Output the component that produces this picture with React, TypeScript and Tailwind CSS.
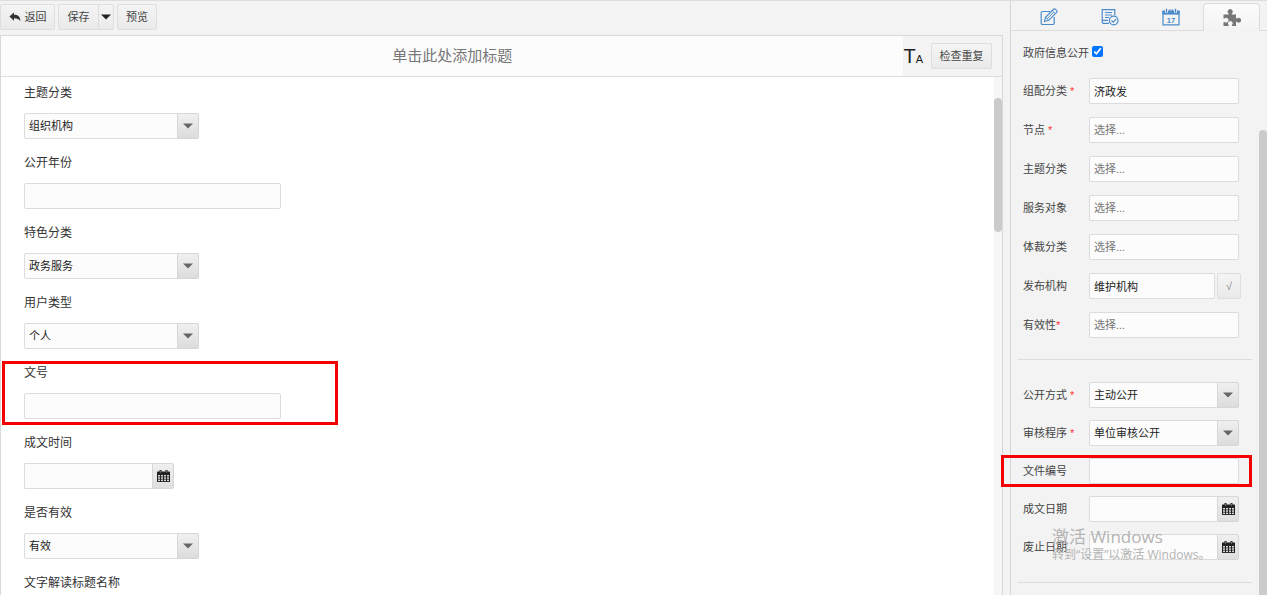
import { useId, type ReactNode } from "react";

type FieldKind = "select" | "text" | "date";

interface Field {
  label: string;
  kind: FieldKind;
  value?: string;
  marked?: boolean;
}

interface SideField {
  label: string;
  kind: FieldKind;
  value?: string;
  placeholder?: string;
  required?: boolean;
  tight?: boolean;
  confirm?: boolean;
  marked?: boolean;
}

const documentFields: Field[] = [
  { label: "主题分类", kind: "select", value: "组织机构" },
  { label: "公开年份", kind: "text" },
  { label: "特色分类", kind: "select", value: "政务服务" },
  { label: "用户类型", kind: "select", value: "个人" },
  { label: "文号", kind: "text", marked: true },
  { label: "成文时间", kind: "date" },
  { label: "是否有效", kind: "select", value: "有效" },
  { label: "文字解读标题名称", kind: "text" },
];

const classFields: SideField[] = [
  { label: "组配分类", kind: "text", value: "济政发", required: true },
  { label: "节点", kind: "text", placeholder: "选择...", required: true },
  { label: "主题分类", kind: "text", placeholder: "选择..." },
  { label: "服务对象", kind: "text", placeholder: "选择..." },
  { label: "体裁分类", kind: "text", placeholder: "选择..." },
  { label: "发布机构", kind: "text", value: "维护机构", confirm: true },
  { label: "有效性", kind: "text", placeholder: "选择...", required: true, tight: true },
];

const publishFields: SideField[] = [
  { label: "公开方式", kind: "select", value: "主动公开", required: true },
  { label: "审核程序", kind: "select", value: "单位审核公开", required: true },
  { label: "文件编号", kind: "text", marked: true },
  { label: "成文日期", kind: "date" },
  { label: "废止日期", kind: "date" },
];

const boxClass =
  "block h-[26px] rounded-[2px] border border-[#dcdcdc] bg-[#fcfcfc] px-1 text-[11px] text-[#222] outline-none placeholder:text-[#777]";
const buttonClass =
  "flex h-[26px] items-center justify-center rounded-[2px] border border-[#dedede] bg-linear-to-b from-[#f4f4f4] to-[#eaeaea] text-[11px] text-[#444]";

function Caret({ className }: { className: string }) {
  return (
    <svg viewBox="0 0 10 6" className={className} aria-hidden="true">
      <path d="M0 0.5h10L5 5.5z" fill="currentColor" />
    </svg>
  );
}

function CalendarIcon() {
  const columns = [1, 4, 7, 10];
  const rows = [5, 7.3, 9.6];
  return (
    <svg viewBox="0 0 13 12" className="h-3 w-[13px]" aria-hidden="true">
      <path d="M0.500 1.500h12a0.500 0.500 0 0 1 0.500 0.500v9.500a0.500 0.500 0 0 1-0.500 0.500h-12a0.500 0.500 0 0 1-0.500-0.500v-9.500a0.500 0.500 0 0 1 0.500-0.500z" fill="currentColor" />
      <path d="M2.500 0h2v2h-2zM8.500 0h2v2h-2z" fill="currentColor" />
      <path d="M3.500 0.800v2M9.500 0.800v2" stroke="#999" strokeWidth="0.700" />
      {rows.map((y) =>
        columns.map((x) => <rect key={`${x}-${y}`} x={x} y={y} width="2" height="1.500" fill="#d8d8d8" />),
      )}
    </svg>
  );
}

function ReplyIcon() {
  return (
    <svg viewBox="0 0 12 10" className="h-[10px] w-3 text-[#333]" aria-hidden="true">
      <path d="M5 0.4v2.4c4 0 6.3 1.8 6.3 6.4C10 7 8 6.300 5 6.300v2.400L0.400 4.500z" fill="currentColor" />
    </svg>
  );
}

function EditIcon() {
  return (
    <svg viewBox="0 0 18 18" className="size-[18px]" fill="none" stroke="currentColor" strokeWidth="1.200" aria-hidden="true">
      <path d="M10 3.500H2.500a1.300 1.300 0 0 0-1.300 1.300v10.400a1.300 1.300 0 0 0 1.300 1.300h10.400a1.300 1.300 0 0 0 1.300-1.300V9" />
      <path d="M4.500 13.500l1-4.300 8.100-8c.500-.500 1.200-.400 1.700 0l1.400 1.400c.500.500.500 1.200 0 1.700l-8 8z" />
      <path d="M12.300 2.600l3 3M5.500 9.200l3.200 3.100M7.100 10.800l6.700-6.700" strokeWidth="0.900" />
    </svg>
  );
}

function ReviewIcon() {
  return (
    <svg viewBox="0 0 18 18" className="size-[18px]" fill="none" stroke="currentColor" strokeWidth="1.200" aria-hidden="true">
      <path d="M8 15.400H3c-1 0-1.800-.600-1.800-1.600V1.600h12.600v5.600" />
      <path d="M1.200 12.400h5.800M4 4.500h7M4 7h7M4 9.500h4" />
      <circle cx="12.700" cy="12.500" r="4.300" />
      <path d="M10.500 12.500l1.700 1.700 2.900-3.100" />
    </svg>
  );
}

function DateTabIcon() {
  return (
    <svg viewBox="0 0 18 18" className="size-[18px]" aria-hidden="true">
      <path d="M1 3h16v13.800H1z" fill="none" stroke="currentColor" strokeWidth="1.200" />
      <path d="M0.400 3h17.200v3.600H0.400z" fill="currentColor" />
      <path d="M4.500 0.800v4M13.500 0.800v4" stroke="#f3f3f3" strokeWidth="3" />
      <path d="M4.500 0.800v3.600M13.500 0.800v3.600" stroke="currentColor" strokeWidth="1.400" />
      <path d="M7.800 1.200v2M10.200 1.200v2" stroke="currentColor" strokeWidth="1" />
      <text x="9" y="14.500" textAnchor="middle" fontSize="7.500" fontWeight="700" fill="currentColor">
        17
      </text>
    </svg>
  );
}

function PuzzleIcon() {
  return (
    <svg viewBox="0 0 18 18" className="size-[18px]" aria-hidden="true">
      <path
        d="M0.500 5.500H5.600V4.600A2.500 2.500 0 1 1 8.800 4.600V5.500H13V9.600H13.900A2.400 2.400 0 1 1 13.900 12.800H13V17H9V15.900A2.300 2.300 0 1 0 5.600 15.900V17H0.500V12.900H1.600A2.300 2.300 0 1 0 1.600 9.500H0.500Z"
        fill="currentColor"
      />
    </svg>
  );
}

function SelectBox({ id, value, className }: { id: string; value: string; className: string }) {
  return (
    <div className={`relative ${className}`}>
      <select id={id} defaultValue={value} className={`${boxClass} w-full appearance-none pr-6`}>
        <option>{value}</option>
      </select>
      <span className="pointer-events-none absolute inset-y-0 right-0 flex w-[22px] items-center justify-center rounded-r-[2px] border border-[#d6d6d6] bg-linear-to-b from-[#f0f0f0] to-[#dcdcdc] text-[#666]">
        <Caret className="h-[6px] w-[10px]" />
      </span>
    </div>
  );
}

function DateBox({ id, label }: { id: string; label: string }) {
  return (
    <div className="flex w-[150px]">
      <input id={id} type="text" className={`${boxClass} min-w-0 flex-1 rounded-r-none border-r-0`} />
      <button
        type="button"
        aria-label={`选择${label}`}
        className="flex h-[26px] w-[22px] items-center justify-center rounded-r-[2px] border border-[#d6d6d6] bg-linear-to-b from-[#f0f0f0] to-[#dedede] text-[#222]"
      >
        <CalendarIcon />
      </button>
    </div>
  );
}

function DocumentRow({ field }: { field: Field }) {
  const id = useId();
  return (
    <div className="relative flex flex-col items-start gap-[10px]">
      <label htmlFor={id} className="text-[12px] leading-5 text-[#333]">
        {field.label}
      </label>
      {field.kind === "select" && <SelectBox id={id} value={field.value ?? ""} className="w-[175px]" />}
      {field.kind === "text" && <input id={id} type="text" className={`${boxClass} w-[257px]`} />}
      {field.kind === "date" && <DateBox id={id} label={field.label} />}
      {field.marked && (
        <span className="pointer-events-none absolute -top-[2px] -bottom-[6px] -left-[22px] w-[336px] border-3 border-[#f40000]" />
      )}
    </div>
  );
}

function SideRow({ field }: { field: SideField }) {
  const id = useId();
  return (
    <div className="relative flex items-center">
      <label htmlFor={id} className="flex w-[66px] shrink-0 text-[11px] leading-5 text-[#444]">
        {field.label}
        {field.required && <span className={field.tight ? "text-[#f33]" : "pl-[3px] text-[#f33]"}>*</span>}
      </label>
      {field.kind === "select" && <SelectBox id={id} value={field.value ?? ""} className="w-[150px]" />}
      {field.kind === "date" && <DateBox id={id} label={field.label} />}
      {field.kind === "text" && (
        <input
          id={id}
          type="text"
          defaultValue={field.value}
          placeholder={field.placeholder}
          className={`${boxClass} ${field.confirm ? "w-[126px]" : "w-[150px]"}`}
        />
      )}
      {field.confirm && (
        <button type="button" className={`${buttonClass} ml-[2px] w-6 text-[#888]`}>
          √
        </button>
      )}
      {field.marked && (
        <span className="pointer-events-none absolute -inset-y-[3px] right-0 -left-[22px] border-3 border-[#f40000]" />
      )}
    </div>
  );
}

function Tab({ label, active, children }: { label: string; active?: boolean; children: ReactNode }) {
  return (
    <button
      type="button"
      role="tab"
      aria-label={label}
      aria-selected={active ?? false}
      className={
        active
          ? "-mb-px flex h-7 w-[57px] items-center justify-center rounded-t-[4px] border border-b-0 border-[#dcdcdc] bg-linear-to-b from-[#fbfbfb] to-[#f3f3f3] text-[#777]"
          : "flex h-[27px] w-[57px] items-center justify-center text-[#4a8ccb]"
      }
    >
      {children}
    </button>
  );
}

export default function App() {
  return (
    <div className="flex h-screen overflow-hidden border-t border-[#dedede] bg-[#f3f3f3] font-['Liberation_Sans','Noto_Sans_CJK_SC',sans-serif]">
      <main className="mr-[7px] flex min-w-0 flex-1 flex-col">
        <div role="toolbar" className="flex gap-[3px] pt-[3px] pb-[5px]">
          <button type="button" className={`${buttonClass} w-[55px] gap-1`}>
            <ReplyIcon />
            返回
          </button>
          <div className="flex">
            <button type="button" className={`${buttonClass} w-10 rounded-r-none border-r-0`}>
              保存
            </button>
            <button type="button" aria-label="更多保存选项" className={`${buttonClass} w-4 rounded-l-none`}>
              <Caret className="h-[6px] w-[10px] shrink-0 text-[#222]" />
            </button>
          </div>
          <button type="button" className={`${buttonClass} w-10`}>
            预览
          </button>
        </div>

        <section className="flex min-h-0 flex-1 flex-col border border-b-0 border-[#d8d8d8] bg-white">
          <header className="flex h-[41px] shrink-0 items-stretch border-b border-[#dedede] bg-[#f3f3f3]">
            <input
              type="text"
              aria-label="标题"
              placeholder="单击此处添加标题"
              className="min-w-0 flex-1 bg-[#fcfcfc] text-center text-[15px] outline-none placeholder:text-[#777]"
            />
            <div className="flex items-center gap-2 pr-[10px]">
              <button type="button" aria-label="文字格式" className="flex items-baseline text-[#222]">
                <span className="text-[20px]">T</span>
                <span className="text-[11px]">A</span>
              </button>
              <button type="button" className={`${buttonClass} w-[61px]`}>
                检查重复
              </button>
            </div>
          </header>

          <div className="flex min-h-0 flex-1">
            <form className="flex min-w-0 flex-1 flex-col gap-[14px] pt-[6px] pl-[23px]">
              {documentFields.map((field) => (
                <DocumentRow key={field.label} field={field} />
              ))}
            </form>
            <div className="w-2 bg-[#f6f6f6] pt-[21px]">
              <div className="h-[134px] rounded-full bg-[#cbcbcb]" />
            </div>
          </div>
        </section>
      </main>

      <aside className="relative flex w-[257px] shrink-0 flex-col border-l border-[#d6d6d6]">
        <div role="tablist" className="flex h-[30px] shrink-0 items-end gap-1 border-b border-[#dcdcdc] pl-[9px]">
          <Tab label="编辑">
            <EditIcon />
          </Tab>
          <Tab label="审核">
            <ReviewIcon />
          </Tab>
          <Tab label="日期">
            <DateTabIcon />
          </Tab>
          <Tab label="扩展" active>
            <PuzzleIcon />
          </Tab>
        </div>

        <div className="flex min-h-0 flex-1">
          <form className="flex min-w-0 flex-1 flex-col px-[7px] pt-3">
            <label className="flex items-center gap-[3px] pl-[5px] text-[11px] leading-5 text-[#444]">
              政府信息公开
              <input type="checkbox" defaultChecked className="mb-1 size-[11px]" />
            </label>
            <div className="mt-[15px] flex flex-col gap-[13px] pl-[5px]">
              {classFields.map((field) => (
                <SideRow key={field.label} field={field} />
              ))}
            </div>
            <hr className="mt-[21px] border-[#dcdcdc]" />
            <div className="mt-[22px] flex flex-col gap-3 pl-[5px]">
              {publishFields.map((field) => (
                <SideRow key={field.label} field={field} />
              ))}
            </div>
            <hr className="mt-[22px] border-[#dcdcdc]" />
          </form>
          <div className="flex w-2 flex-col pt-[99px]">
            <div className="flex-1 rounded-t-full bg-[#cbcbcb]" />
          </div>
        </div>

        <div className="pointer-events-none absolute top-[525px] left-[41px] font-['Open_Sans','Noto_Sans_CJK_SC',sans-serif] whitespace-nowrap text-[#b4b4b4]">
          <p className="text-[17px] leading-[22px]">激活 Windows</p>
          <p className="text-[12px] leading-[14px]">转到“设置”以激活 Windows。</p>
        </div>
      </aside>
    </div>
  );
}
